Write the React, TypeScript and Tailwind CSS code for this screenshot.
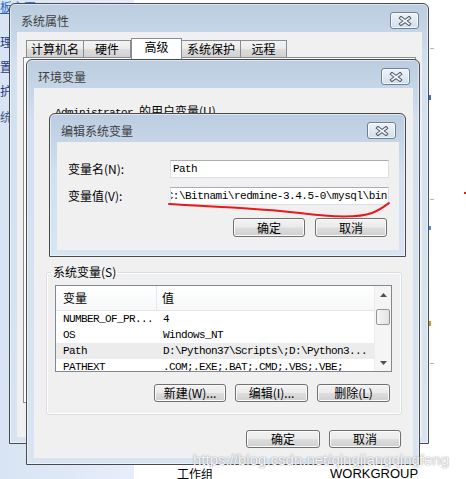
import React from "react";

const cjk = "font-['Noto_Sans_CJK_SC',sans-serif]";
const mono = "font-['Liberation_Mono',monospace] text-[11px] tracking-[-0.6px]";
const btnClass =
  "flex h-[18px] items-center justify-center rounded-[3px] border border-[#707070] bg-[linear-gradient(#f2f2f2_0%,#ebebeb_48%,#dddddd_52%,#cfcfcf_100%)] text-[12px] leading-[14px] text-black shadow-[inset_0_0_0_1px_#fbfbfb]";

const rows = [
  ["NUMBER_OF_PR...", "4"],
  ["OS", "Windows_NT"],
  ["Path", "D:\\Python37\\Scripts\\;D:\\Python3..."],
  ["PATHEXT", ".COM;.EXE;.BAT;.CMD;.VBS;.VBE;"],
];

function CloseButton() {
  return (
    <div className="flex h-[17px] w-[29px] items-center justify-center rounded-[3px] border border-[#6f7f95] bg-[linear-gradient(#eef3f9,#d3deec)] shadow-[inset_0_0_0_1px_rgba(255,255,255,0.7)]">
      <svg width="14" height="10" viewBox="0 0 14 10">
        <path d="M3 2 L11 8 M11 2 L3 8" stroke="#4f5b6b" strokeWidth="3.6" strokeLinecap="square" />
        <path d="M3 2 L11 8 M11 2 L3 8" stroke="#f5f7fa" strokeWidth="1.6" strokeLinecap="square" />
      </svg>
    </div>
  );
}

function Window({
  title,
  className,
  children,
}: {
  title: string;
  className: string;
  children?: React.ReactNode;
}) {
  return (
    <div
      className={`absolute flex flex-col rounded-t-[6px] border border-[#4a4a4a] bg-[linear-gradient(#bccde1,#d2e0ef_60px,#d8e4f2)] shadow-[inset_0_0_0_1px_rgba(255,255,255,0.5)] ${className}`}
    >
      <div className="flex h-[28px] shrink-0 items-center justify-between pl-[11px] pr-[9px] pt-[5px]">
        <span className="text-[12px] leading-[14px] text-[#404040]">{title}</span>
        <CloseButton />
      </div>
      <div className="mb-[6px] ml-[7px] mr-[6px] flex flex-1 flex-col overflow-hidden bg-[#f0f0f0]">
        {children}
      </div>
    </div>
  );
}

function Arrow({ up }: { up?: boolean }) {
  return (
    <svg width="7" height="4" viewBox="0 0 7 4">
      <path d={up ? "M0 4 L3.5 0 L7 4Z" : "M0 0 L3.5 4 L7 0Z"} fill="#505050" />
    </svg>
  );
}

export default function App() {
  return (
    <div className={`relative flex h-[479px] w-[466px] overflow-hidden bg-white text-[12px] ${cjk}`}>
      {/* page behind the dialogs */}
      <div className="flex h-full w-[134px] flex-col bg-[linear-gradient(to_right,#d8e4f3,#e6eef9)] leading-[14px]">
        <span className="-ml-[36px] whitespace-nowrap text-[#1c64c8] underline">控制面板主页</span>
        <span className="-ml-[36px] mt-[21px] whitespace-nowrap text-[#1d3a8a]">设备管理器</span>
        <span className="-ml-[36px] mt-[11px] whitespace-nowrap text-[#1d3a8a]">远程设置</span>
        <span className="-ml-[36px] mt-[10px] whitespace-nowrap text-[#1d3a8a]">系统保护</span>
        <span className="-ml-[36px] mt-[12px] whitespace-nowrap text-[#3f5a8c]">高级系统设置</span>
      </div>
      <div className="flex-1 bg-white" />

      <span className="absolute left-[177px] top-[467px] text-[12px] leading-[14px] text-black">工作组</span>
      <span className="absolute left-[330px] top-[467px] font-['Liberation_Sans',sans-serif] text-[13px] leading-[14px] text-black">
        WORKGROUP
      </span>
      <span className="absolute left-[430px] top-[48px] h-px w-[4px] bg-[#b5b5b5]" />
      <span className="absolute left-[429px] top-[95px] h-[5px] w-[2px] bg-[#3a6fc4]" />
      <span className="absolute left-[430px] top-[199px] h-px w-[4px] bg-[#b5b5b5]" />
      <span className="absolute left-[429px] top-[226px] h-[4px] w-[2px] bg-[#4b8fe0]" />
      <span className="absolute left-[429px] top-[321px] h-[5px] w-[2px] bg-[#c89a2a]" />
      <span className="absolute left-[430px] top-[363px] h-px w-[4px] bg-[#b5b5b5]" />
      <span className="absolute left-[464px] top-[192px] h-[2px] w-[2px] bg-[#e02020]" />

      {/* 系统属性 */}
      <Window title="系统属性" className="left-[9px] top-[3px] h-[441px] w-[420px]">
        <div className="flex flex-col px-[6px] pt-[6px]">
          <div className="relative z-10 flex h-[19px] items-end pl-[3px]">
            <div className="flex h-[17px] w-[58px] items-center justify-center border border-b-0 border-[#898c95] bg-[linear-gradient(#f3f3f3_0%,#ebebeb_50%,#dddddd_50%,#d2d2d2_100%)] leading-[14px]">
              计算机名
            </div>
            <div className="flex h-[17px] w-[47px] items-center justify-center border border-b-0 border-l-0 border-[#898c95] bg-[linear-gradient(#f3f3f3_0%,#ebebeb_50%,#dddddd_50%,#d2d2d2_100%)] leading-[14px]">
              硬件
            </div>
            <div className="-mb-[2px] flex h-[21px] w-[51px] items-start justify-center border border-b-0 border-[#898c95] bg-white pt-[1px] leading-[14px]">
              高级
            </div>
            <div className="flex h-[17px] w-[59px] items-center justify-center border border-b-0 border-l-0 border-[#898c95] bg-[linear-gradient(#f3f3f3_0%,#ebebeb_50%,#dddddd_50%,#d2d2d2_100%)] leading-[14px]">
              系统保护
            </div>
            <div className="flex h-[17px] w-[46px] items-center justify-center border border-b-0 border-l-0 border-[#898c95] bg-[linear-gradient(#f3f3f3_0%,#ebebeb_50%,#dddddd_50%,#d2d2d2_100%)] leading-[14px]">
              远程
            </div>
          </div>
          <div className="h-[346px] border border-[#898c95] bg-[#fbfbfb]" />
        </div>
      </Window>

      {/* 环境变量 */}
      <Window title="环境变量" className="left-[26px] top-[59px] h-[406px] w-[394px]">
        <div className="pl-[21px] pt-[16px] leading-[14px] text-black">
          <span className={mono}>Administrator </span>
          <span>的用户变量(U)</span>
        </div>
        <div className="h-[145px]" />
        <fieldset className="ml-[12px] mr-[11px] rounded-[3px] border border-[#d5dfe5] p-0 shadow-[inset_0_0_0_1px_#ffffff]">
          <legend className="ml-[4px] px-[2px] leading-[14px] text-black">系统变量(S)</legend>
          <div className="flex flex-col pb-[12px] pt-[6px]">
            <div className="ml-[8px] mr-[9px] flex h-[87px] overflow-hidden border border-[#828790] bg-white">
              <div className="flex flex-1 flex-col overflow-hidden">
                <div className="flex h-[25px] shrink-0 border-b border-[#e5e5e5] bg-[linear-gradient(#ffffff,#f7f8fa)] leading-[14px] text-black">
                  <div className="flex w-[101px] items-center border-r border-[#e3e8ee] pl-[7px]">变量</div>
                  <div className="flex items-center pl-[5px]">值</div>
                </div>
                {rows.map(([name, value]) => (
                  <div
                    key={name}
                    className={`flex h-[16px] shrink-0 items-center whitespace-nowrap text-black ${mono} ${
                      name === "Path" ? "bg-[#ececec]" : ""
                    }`}
                  >
                    <div className="w-[101px] pl-[7px]">{name}</div>
                    <div className="pl-[6px]">{value}</div>
                  </div>
                ))}
              </div>
              <div className="flex w-[17px] flex-col border-l border-[#ececec] bg-[#f5f5f5]">
                <div className="flex h-[17px] items-center justify-center">
                  <Arrow up />
                </div>
                <div className="mx-[1px] mt-[6px] h-[16px] rounded-[2px] border border-[#979797] bg-[linear-gradient(to_right,#f6f6f6,#e2e2e2)]" />
                <div className="flex-1" />
                <div className="flex h-[17px] items-center justify-center">
                  <Arrow />
                </div>
              </div>
            </div>
            <div className="mr-[11px] mt-[12px] flex justify-end gap-[9px]">
              <div className={`${btnClass} w-[72px]`}>新建(W)...</div>
              <div className={`${btnClass} w-[73px]`}>编辑(I)...</div>
              <div className={`${btnClass} w-[73px]`}>删除(L)</div>
            </div>
          </div>
        </fieldset>
        <div className="mr-[12px] mt-[15px] flex justify-end gap-[9px]">
          <div className={`${btnClass} w-[74px]`}>确定</div>
          <div className={`${btnClass} w-[72px]`}>取消</div>
        </div>
      </Window>

      {/* 编辑系统变量 */}
      <Window title="编辑系统变量" className="left-[49px] top-[113px] h-[144px] w-[357px]">
        <div className="flex flex-col pl-[11px] pr-[10px] pt-[18px] text-black">
          <div className="flex h-[18px] items-center">
            <span className="w-[102px] leading-[14px]">变量名(N):</span>
            <div
              className={`flex h-[18px] flex-1 items-center border border-[#dbdfe6] border-t-[#abadb3] bg-white pl-[2px] ${mono}`}
            >
              Path
            </div>
          </div>
          <div className="mt-[9px] flex h-[18px] items-center">
            <span className="w-[102px] leading-[14px]">变量值(V):</span>
            <div className="flex h-[18px] flex-1 items-center justify-end overflow-hidden whitespace-nowrap border border-[#dbdfe6] border-t-[#abadb3] bg-white pr-[1px] font-['Liberation_Mono',monospace] text-[11px] tracking-[-0.48px]">
              ;C:\Bitnami\redmine-3.4.5-0\mysql\bin
            </div>
          </div>
          <div className="mt-[13px] flex justify-end gap-[10px] pr-[2px]">
            <div className={`${btnClass} h-[19px] w-[72px]`}>确定</div>
            <div className={`${btnClass} h-[19px] w-[72px]`}>取消</div>
          </div>
        </div>
      </Window>

      {/* red hand-drawn underline */}
      <svg className="pointer-events-none absolute left-0 top-0" width="466" height="479">
        <path
          d="M169 204 C 200 206, 260 208, 300 213 C 330 217, 358 218, 372 213 C 380 210, 385 206, 389 203"
          stroke="#e8191a"
          strokeWidth="2"
          fill="none"
          strokeLinecap="round"
        />
      </svg>

      {/* watermark */}
      <span className="pointer-events-none absolute left-[193px] top-[452px] whitespace-nowrap font-['Liberation_Sans',sans-serif] text-[15px] leading-[15px] text-[#f6f6f6] [text-shadow:0_0_1.5px_rgba(110,110,110,0.9)]">
        https://blog.csdn.net/qingjiangqingfeng
      </span>
    </div>
  );
}
